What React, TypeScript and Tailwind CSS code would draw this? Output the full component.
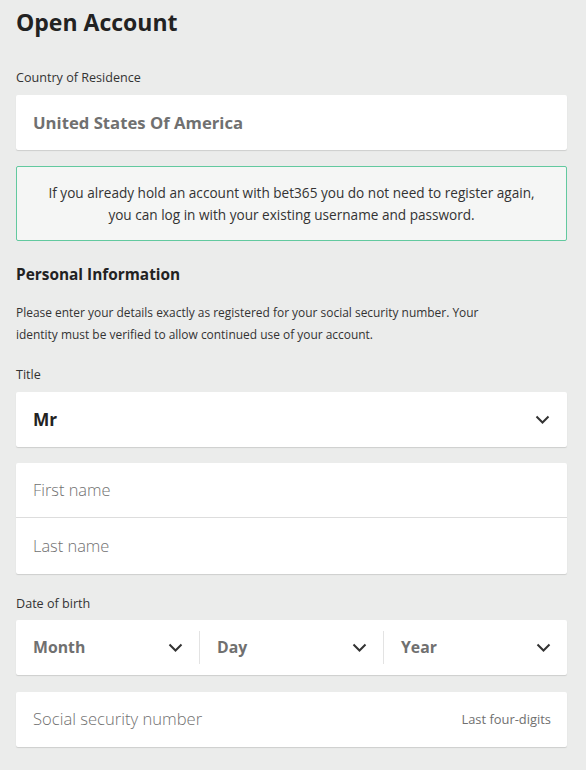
import React from "react";

const font = { fontFamily: '"Open Sans", "Noto Sans", sans-serif' };

function Chevron() {
  return (
    <svg width="15" height="9" viewBox="0 0 15 9" className="shrink-0">
      <path d="M1.5 1.5 L7.5 7.5 L13.5 1.5" fill="none" stroke="#333" strokeWidth="2" />
    </svg>
  );
}

const card = "bg-white rounded-[2px] shadow-[0_1px_1px_rgba(0,0,0,0.13)]";

export default function App() {
  return (
    <div className="min-h-[770px] bg-[#ebeceb] pl-4 pr-[19px] pt-[5px] pb-6 text-[#222]" style={font}>
      <h1 className="text-[23px] font-bold leading-[34px] text-[#222]">Open Account</h1>

      <div className="mt-[31px] text-[12.6px] leading-[16px] text-[#333]">Country of Residence</div>
      <div className={`${card} mt-[9px] h-[55px] flex items-center px-[17px]`}>
        <span className="text-[16.7px] font-bold text-[#707070]">United States Of America</span>
      </div>

      <div className="mt-[16px] border border-[#62c99f] rounded-[2px] bg-[#f5f6f5] h-[75px] flex items-center justify-center px-2 text-center text-[13.6px] leading-[22px] text-[#333]">
        <p>
          If you already hold an account with bet365 you do not need to register again,
          <br />
          you can log in with your existing username and password.
        </p>
      </div>

      <h2 className="mt-[23px] text-[15.4px] font-bold leading-[22px] text-[#222]">Personal Information</h2>
      <p className="mt-[16px] max-w-[500px] text-[11.95px] leading-[22px] text-[#333]">
        Please enter your details exactly as registered for your social security number. Your identity must be verified to allow continued use of your account.
      </p>

      <div className="mt-[21px] text-[12.6px] leading-[16px] text-[#333]">Title</div>
      <div className={`${card} mt-[9px] h-[55px] flex items-center justify-between pl-[17px] pr-[17px]`}>
        <span className="text-[17.3px] font-bold text-[#222]">Mr</span>
        <Chevron />
      </div>

      <div className={`${card} mt-[16px]`}>
        <div className="h-[55px] flex items-center px-[17px] border-b border-[#ddd]">
          <span className="text-[16.4px] font-light text-[#707070]">First name</span>
        </div>
        <div className="h-[56px] flex items-center px-[17px]">
          <span className="text-[16.4px] font-light text-[#707070]">Last name</span>
        </div>
      </div>

      <div className="mt-[22px] text-[12.6px] leading-[16px] text-[#333]">Date of birth</div>
      <div className={`${card} mt-[8px] h-[55px] flex items-center`}>
        {["Month", "Day", "Year"].map((l, i) => (
          <div key={l} className={`flex-1 flex items-center justify-between pl-[17px] pr-[16px] h-[33px] ${i > 0 ? "border-l border-[#e3e3e3]" : ""}`}>
            <span className="text-[15.8px] font-bold text-[#707070]">{l}</span>
            <Chevron />
          </div>
        ))}
      </div>

      <div className={`${card} mt-[17px] h-[55px] flex items-center justify-between pl-[17px] pr-[16px]`}>
        <span className="text-[16.6px] font-light text-[#707070]">Social security number</span>
        <span className="text-[12.9px] text-[#707070]">Last four-digits</span>
      </div>
    </div>
  );
}
